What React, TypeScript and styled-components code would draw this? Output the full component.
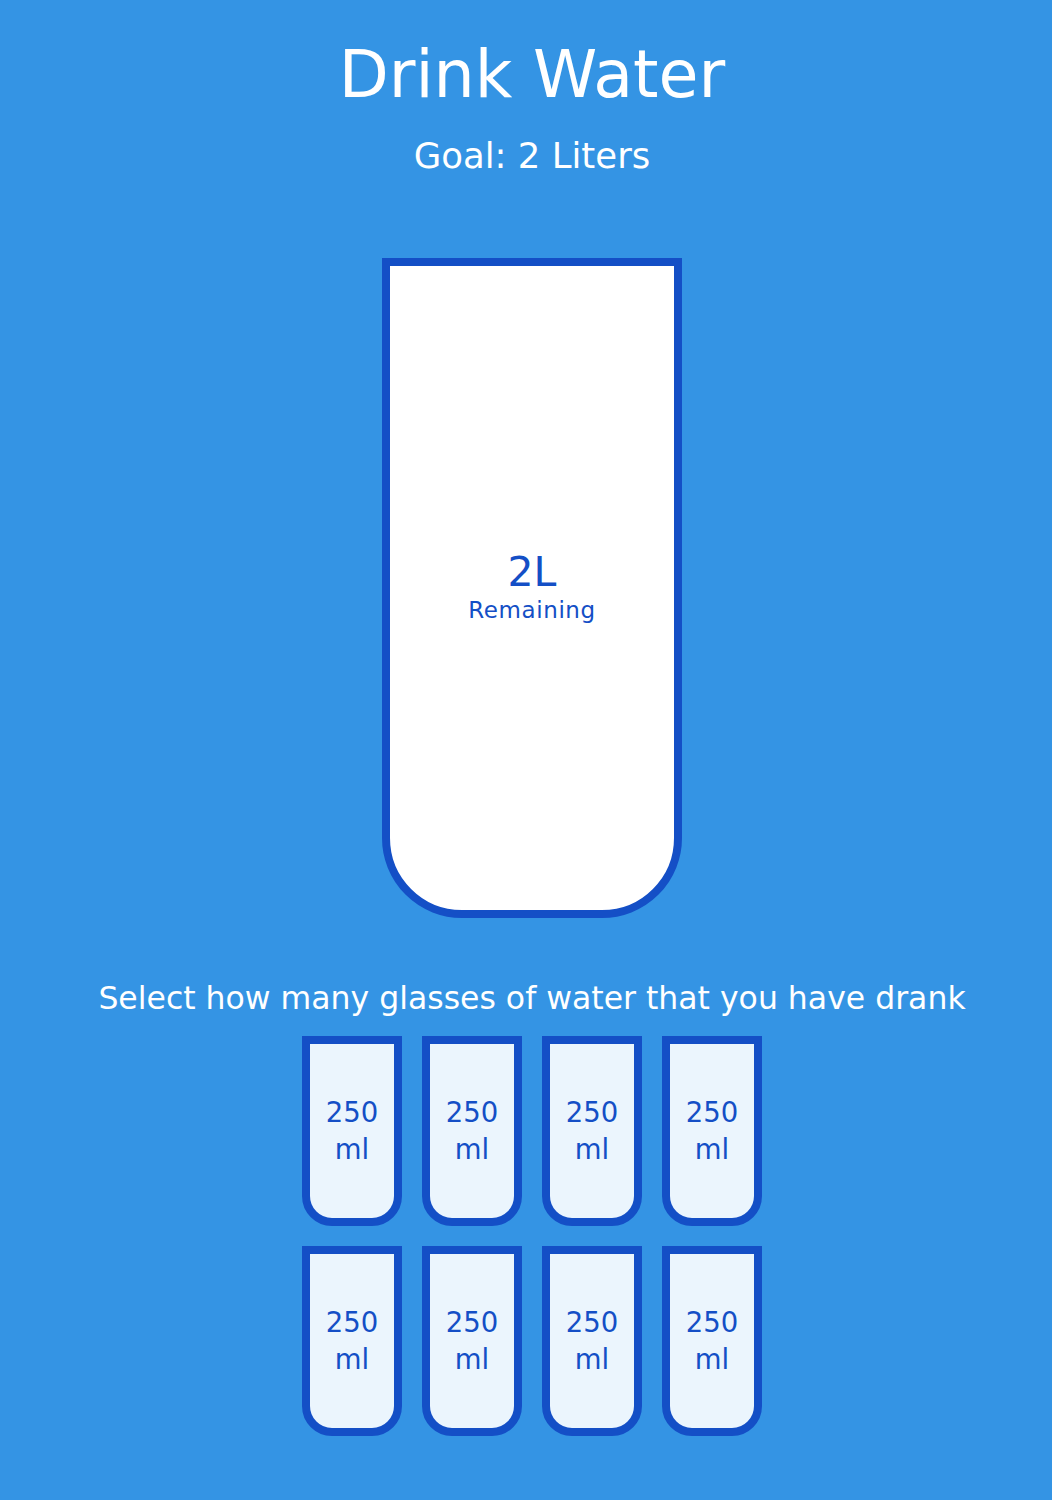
import React from "react";
import styled, { createGlobalStyle } from "styled-components";

const Global = createGlobalStyle`
  * { box-sizing: border-box; }
  html, body { background: #3494e4; }
  body {
    margin: 0;
    min-height: 1500px;
    color: #fff;
    font-family: "DejaVu Sans", "Noto Sans", sans-serif;
  }
`;

const Page = styled.main`
  display: flex;
  flex-direction: column;
  align-items: center;
  padding: 16px 0 100px 12px;
`;

const Title = styled.h1`
  margin: 20px 0 0;
  font-size: 65px;
  font-weight: 500;
  line-height: 78px;
`;

const Subtitle = styled.h3`
  margin: 20px 0;
  font-size: 35.5px;
  font-weight: 400;
  line-height: 44px;
`;

const BigCup = styled.div`
  width: 300px;
  height: 660px;
  margin: 60px 0;
  background: #fff;
  border: 8px solid #144fc6;
  border-radius: 0 0 80px 80px;
  color: #144fc6;
  display: flex;
  flex-direction: column;
  align-items: center;
  justify-content: center;
  overflow: hidden;
`;

const Amount = styled.span`
  font-size: 41px;
  font-weight: 500;
  line-height: 44px;
`;

const Label = styled.small`
  font-size: 23px;
  line-height: 32px;
  letter-spacing: 0.6px;
`;

const Instruction = styled.p`
  margin: 0 0 8px;
  text-align: center;
  font-size: 31.5px;
  line-height: 40px;
`;

const Cups = styled.div`
  width: 560px;
  display: flex;
  flex-wrap: wrap;
  justify-content: center;
`;

const SmallCup = styled.div`
  width: 100px;
  height: 190px;
  margin: 10px;
  background: rgba(255, 255, 255, 0.9);
  border: 8px solid #144fc6;
  border-radius: 0 0 30px 30px;
  color: #144fc6;
  display: flex;
  align-items: center;
  justify-content: center;
  text-align: center;
  font-size: 27.5px;
  line-height: 37px;
`;

export default function App() {
  return (
    <>
      <Global />
      <Page>
        <Title>Drink Water</Title>
        <Subtitle>Goal: 2 Liters</Subtitle>
        <BigCup>
          <Amount>2L</Amount>
          <Label>Remaining</Label>
        </BigCup>
        <Instruction>Select how many glasses of water that you have drank</Instruction>
        <Cups>
          {Array.from({ length: 8 }).map((_, i) => (
            <SmallCup key={i}>250 ml</SmallCup>
          ))}
        </Cups>
      </Page>
    </>
  );
}
